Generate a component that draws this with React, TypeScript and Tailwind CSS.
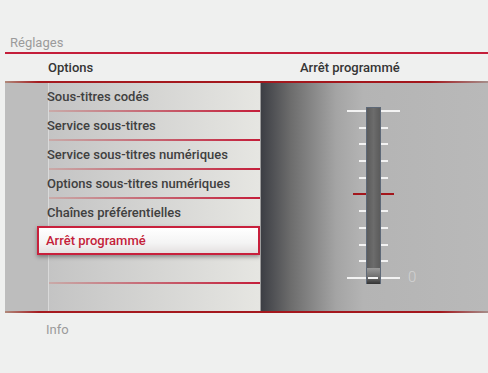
import React from 'react';

const items = [
    'Sous-titres codés',
    'Service sous-titres',
    'Service sous-titres numériques',
    'Options sous-titres numériques',
    'Chaînes préférentielles',
];

const ticks = [6, 23, 39, 56, 73, 89, 106, 123, 140, 156, 173];

function Slider() {
    return (
        <div className="relative w-[80px] h-[184px]">
            <svg width="62" height="184" viewBox="0 0 62 184">
                <defs>
                    <linearGradient id="track" x1="0" x2="1" y1="0" y2="0">
                        <stop offset="0" stopColor="#5a5a5a" />
                        <stop offset="0.5" stopColor="#6c6c6c" />
                        <stop offset="1" stopColor="#5a5a5a" />
                    </linearGradient>
                    <linearGradient id="knob" x1="0" x2="0" y1="0" y2="1">
                        <stop offset="0" stopColor="#9a9a9a" />
                        <stop offset="0.6" stopColor="#6a6a6a" />
                        <stop offset="1" stopColor="#333" />
                    </linearGradient>
                </defs>
                <rect x="21.5" y="2.5" width="14" height="176" fill="url(#track)" stroke="#5d6877" />
                <rect x="22" y="163" width="13" height="16" fill="url(#knob)" />
                {ticks.map((c, i) => {
                    const big = i === 0 || i === ticks.length - 1;
                    const red = i === 5;
                    const len = big ? 19 : red ? 13 : 7;
                    const fill = red ? '#a3161c' : '#f3f3f3';
                    return (
                        <g key={c}>
                            <rect x={21 - len} y={c - 1} width={len} height="2" fill={fill} />
                            <rect x={36} y={c - 1} width={len} height="2" fill={fill} />
                        </g>
                    );
                })}
                <rect x="23" y="172" width="10" height="2" fill="#f3f3f3" />
            </svg>
            <span className="absolute left-[63px] top-[165px] text-[15px] leading-[15px] font-light text-[#d2d2d2]">0</span>
        </div>
    );
}

export default function App() {
    return (
        <div className="w-[488px] h-[373px] bg-[#eff0ef] overflow-hidden font-['Roboto',sans-serif]">
            <div className="h-[52px] pl-[10px] pt-[35px] text-[13px] leading-[15px] text-[#9b9b9b]">Réglages</div>
            <div className="ml-[5px] h-[2px] bg-[#c41e3a]" />

            {/* Column headers */}
            <div className="ml-[5px] h-[27px] flex items-center text-[13px] font-medium text-[#353535]">
                <div className="w-[256px] pl-[43px]">Options</div>
                <div className="pl-[39px]">Arrêt programmé</div>
            </div>
            <div className="ml-[5px] h-[2px] bg-[linear-gradient(to_right,#b08a7c_0%,#a51a1f_7%,#a3161c_88%,#a58f8b_100%)]" />

            {/* Main panel */}
            <div className="ml-[5px] h-[228px] flex">
                <div className="w-[255px] flex">
                    <div className="w-[44px] bg-[#bdbdbd] border-r border-[#d9d9d9]" />
                    <div className="flex-1 flex flex-col bg-[linear-gradient(to_right,#c4c4c4,#e6e6e2)]">
                        {items.map((label) => (
                            <div key={label} className="h-[29px] flex flex-col">
                                <div className="flex-1 flex items-center -ml-[2px] text-[13px] font-medium text-[#404040]">{label}</div>
                                <div className="h-[2px] bg-[linear-gradient(to_right,#c9aaa8,#c41e3a)]" />
                            </div>
                        ))}
                        <div className="-mt-[2px] -ml-[12px] h-[29px] flex items-center pl-[7px] border-2 border-[#c8203c] bg-[linear-gradient(to_bottom,#ffffff,#f4f4f4_60%,#e4e0e0)] shadow-[0_2px_4px_rgba(0,0,0,0.35)] text-[13px] font-medium text-[#c41e3a]">
                            Arrêt programmé
                        </div>
                        <div className="h-[29px] flex flex-col">
                            <div className="flex-1" />
                            <div className="h-[2px] bg-[linear-gradient(to_right,#c9aaa8,#c41e3a)]" />
                        </div>
                    </div>
                </div>
                <div className="w-[1px] bg-[#9c9c9c]" />
                <div className="flex-1 pl-[84px] pt-[22px] bg-[linear-gradient(to_right,#3c3e44_0%,#6c6c6c_13%,#a4a4a4_33%,#b4b4b4_45%,#b9b9b9_100%)]">
                    <Slider />
                </div>
            </div>
            <div className="ml-[5px] h-[2px] bg-[linear-gradient(to_right,#b08a7c_0%,#a51a1f_7%,#a3161c_90%,#a58f8b_100%)]" />

            <div className="pl-[46px] pt-[9px] text-[13px] leading-[15px] text-[#9b9b9b]">Info</div>
        </div>
    );
}
